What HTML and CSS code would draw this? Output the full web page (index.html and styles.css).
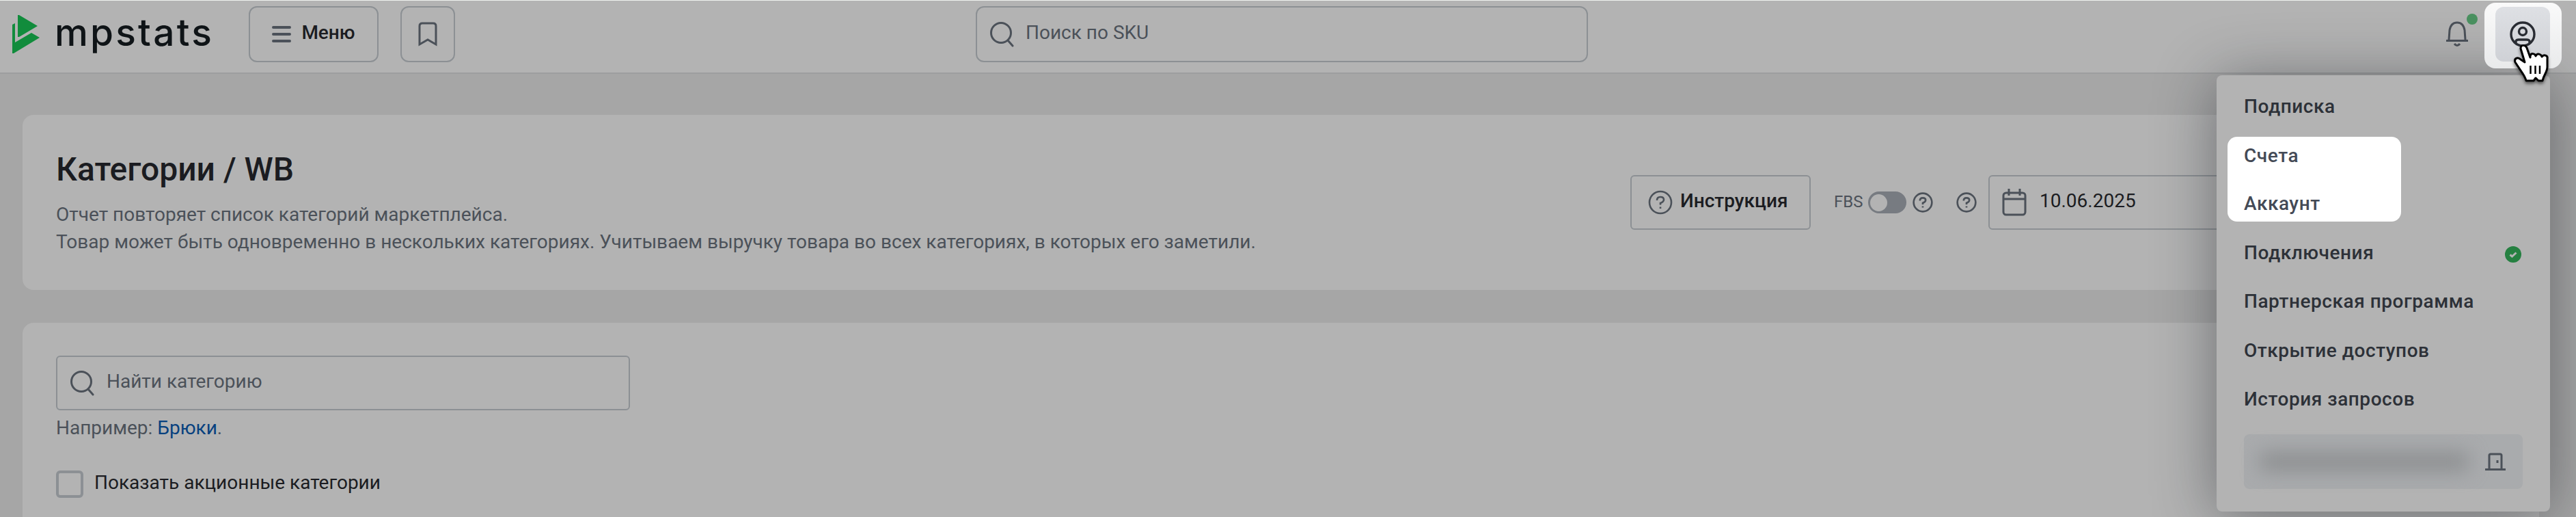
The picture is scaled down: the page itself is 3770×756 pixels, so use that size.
FILE: index.html
```html
<!DOCTYPE html>
<html lang="ru">
<head>
    <meta charset="UTF-8">
    <title>MPSTATS</title>
    <link rel="stylesheet" href="styles.css">
</head>
<body>
<header class="header">
    <a class="logo">
        <svg class="logo-mark" width="40" height="56" viewBox="0 0 40 56">
            <path fill="#118c3c" d="M8 0H10L37 16L10 32H8zM0 14L4 12V40L28 26L40 33L2 56H0z"/>
        </svg>
        <span class="logo-text">mpstats</span>
    </a>
    <button class="btn btn-menu">
        <svg width="28" height="26" viewBox="0 0 28 26" fill="none" stroke="#4b5159" stroke-width="4" stroke-linecap="round">
            <path d="M2 3H26M2 13H26M2 23H26"/>
        </svg>
        <span class="label">Меню</span>
    </button>
    <button class="btn btn-bookmark">
        <svg width="28" height="36" viewBox="0 0 28 36" fill="none" stroke="#4b5159" stroke-width="3">
            <path d="M2 33V6Q2 2 6 2H22Q26 2 26 6V33L14 26Z"/>
        </svg>
    </button>
    <div class="field header-search">
        <svg width="36" height="38" viewBox="0 0 36 38" fill="none" stroke="#4b5159" stroke-width="3" stroke-linecap="round">
            <circle cx="17" cy="17" r="14.5"/><path d="M27 28L34 36"/>
        </svg>
        <span class="label">Поиск по SKU</span>
    </div>
    <div class="bell">
        <svg width="34" height="38" viewBox="0 0 34 38" fill="none" stroke="#4b5159" stroke-width="3">
            <path d="M5 27L6 13Q8 2 17 2Q26 2 28 13L29 27M1 28.500H33M13 33Q17 38 21 33"/>
        </svg>
        <span class="bell-dot"></span>
    </div>
</header>

<main class="page">
    <section class="card card-title">
        <div class="intro">
            <h1>Категории / WB</h1>
            <p>Отчет повторяет список категорий маркетплейса.<br>Товар может быть одновременно в нескольких категориях. Учитываем выручку товара во всех категориях, в которых его заметили.</p>
        </div>
        <div class="controls">
            <button class="btn btn-help">
                <svg width="36" height="36" viewBox="0 0 36 36" fill="none" stroke="#4b5159" stroke-width="2.600">
                    <circle cx="18" cy="18" r="16"/><path d="M13 15Q13 10 18 10Q23 10 23 14Q23 17 18 19V21.500M18 24.500V27"/>
                </svg>
                <span class="label">Инструкция</span>
            </button>
            <span class="fbs">FBS</span>
            <span class="toggle"><span class="toggle-knob"></span></span>
            <svg class="hint" width="30" height="30" viewBox="0 0 36 36" fill="none" stroke="#4b5159" stroke-width="3.200">
                <circle cx="18" cy="18" r="16"/><path d="M13 15Q13 10 18 10Q23 10 23 14Q23 17 18 19V21.500M18 24.500V27"/>
            </svg>
            <svg class="hint hint-date" width="30" height="30" viewBox="0 0 36 36" fill="none" stroke="#4b5159" stroke-width="3.200">
                <circle cx="18" cy="18" r="16"/><path d="M13 15Q13 10 18 10Q23 10 23 14Q23 17 18 19V21.500M18 24.500V27"/>
            </svg>
            <div class="field date">
                <svg width="36" height="40" viewBox="0 0 36 40" fill="none" stroke="#4b5159" stroke-width="3">
                    <rect x="2" y="6" width="32" height="32" rx="4"/><path d="M2 15H34M10 0V10M26 0V10"/>
                </svg>
                <span class="label">10.06.2025</span>
            </div>
        </div>
    </section>

    <section class="card card-list">
        <div class="field category-search">
            <svg width="36" height="38" viewBox="0 0 36 38" fill="none" stroke="#4b5159" stroke-width="3" stroke-linecap="round">
                <circle cx="17" cy="17" r="14.500"/><path d="M27 28L34 36"/>
            </svg>
            <span class="label">Найти категорию</span>
        </div>
        <p class="example">Например: <a>Брюки</a>.</p>
        <label class="check"><span class="check-box"></span><span class="label">Показать акционные категории</span></label>
    </section>
</main>

<!-- user menu, opened under the account button -->
<nav class="user-menu">
    <a class="item">Подписка</a>
    <div class="item-group">
        <a class="item">Счета</a>
        <a class="item">Аккаунт</a>
    </div>
    <a class="item">Подключения
        <svg class="item-ok" width="24" height="24" viewBox="0 0 24 24">
            <circle cx="12" cy="12" r="12" fill="#258041"/>
            <path d="M7.500 12.500L10.500 15L16.500 9.500" fill="none" stroke="#b3b3b3" stroke-width="3"/>
        </svg>
    </a>
    <a class="item">Партнерская программа</a>
    <a class="item">Открытие доступов</a>
    <a class="item">История запросов</a>
    <div class="account">
        <span class="account-mail"></span>
        <svg width="30" height="26" viewBox="0 0 30 26" fill="none" stroke="#4b5159" stroke-width="3">
            <path d="M0 24.500H30M6 24V4Q6 2 8 2H22Q24 2 24 4V24"/><path d="M18 11V15"/>
        </svg>
    </div>
</nav>

<div class="account-spot">
    <div class="account-btn">
        <svg width="38" height="38" viewBox="0 0 38 38" fill="none" stroke="#292c33" stroke-width="3.400">
            <circle cx="19" cy="19" r="17"/><circle cx="19" cy="15" r="5.500"/><path d="M9 32V29Q10 27 13 27H25Q28 27 29 29V32"/>
        </svg>
    </div>
</div>
<svg class="pointer" width="52" height="56" viewBox="0 0 52 56">
    <path d="M10 6C10 0 17 0 19 5L24 19V17C25 12 31 13 32 17C34 12 40 14 41 18C44 14 50 16 49 21V33C49 40 44 44 42 53H36L32 49L29 53H18C16 45 11 40 8 35L2 26C0 20 6 18 10 22L16 26Z" fill="#fff" stroke="#000" stroke-width="3" stroke-linejoin="round"/>
    <path d="M24.500 31V43M31.500 31V43M38 31V43" stroke="#000" stroke-width="2.500"/>
</svg>
</body>
</html>
```

FILE: styles.css
```css
* {
    box-sizing: border-box;
}

body {
    margin: 0;
    height: 756px;
    overflow: hidden;
    position: relative;
    background-color: #a6a6a6;
    font-family: Roboto, "Liberation Sans", sans-serif;
    font-size: 28px;
    line-height: 40px;
    color: #1b1c21;
}

svg {
    display: block;
    flex: none;
}

h1, p {
    margin: 0;
}

.label {
    padding-bottom: 4px;
}

.header {
    display: flex;
    align-items: center;
    height: 108px;
    padding: 0 152px 7px 18px;
    background-color: #b3b3b3;
    border-top: 1px solid #eef1ef;
    border-bottom: 2px solid #9d9e9f;
}

.logo {
    display: flex;
    align-items: center;
    width: 346px;
    gap: 22px;
}

.logo-text {
    padding-bottom: 7px;
    font-family: Inter, sans-serif;
    font-size: 55px;
    font-weight: 500;
    line-height: 56px;
    letter-spacing: 3.2px;
    color: #0f1417;
}

.btn {
    display: flex;
    align-items: center;
    justify-content: center;
    flex: none;
    padding: 0;
    background: none;
    border: 2px solid #8c9094;
    color: #1b1c21;
    font: 500 28px/40px Roboto, sans-serif;
}

.btn-menu {
    width: 190px;
    height: 82px;
    gap: 15px;
    border-radius: 12px;
}

.btn-bookmark {
    width: 80px;
    height: 82px;
    margin-left: 32px;
    border-radius: 12px;
}

.field {
    display: flex;
    align-items: center;
    flex: none;
    height: 80px;
    border: 2px solid #8c9094;
    border-radius: 6px;
    color: #4b5159;
}

.header-search {
    width: 896px;
    height: 82px;
    margin-left: 762px;
    padding-left: 18px;
    gap: 17px;
    border-radius: 12px;
}

.bell {
    position: relative;
    margin-left: auto;
    margin-right: 5px;
}

.bell-dot {
    position: absolute;
    top: -11px;
    right: -13px;
    width: 16px;
    height: 16px;
    border-radius: 50%;
    background-color: #4a9160;
}

.page {
    padding: 60px 54px 0 33px;
}

.card {
    background-color: #b3b3b3;
    border-radius: 16px;
}

.card-title {
    display: flex;
    justify-content: space-between;
    height: 256px;
    padding: 0 0 0 49px;
    overflow: hidden;
}

.intro {
    padding-top: 52px;
}

h1 {
    font-size: 48px;
    font-weight: 500;
    line-height: 56px;
}

.intro p {
    margin-top: 18px;
    color: #4b5159;
}

.controls {
    display: flex;
    align-items: center;
    width: 1330px;
}

.btn-help {
    justify-content: flex-start;
    width: 264px;
    height: 80px;
    padding-left: 24px;
    gap: 11px;
    border-radius: 6px;
}

.fbs {
    margin-left: 34px;
    padding-bottom: 2px;
    width: 50px;
    font-size: 24px;
    color: #4b5159;
}

.toggle {
    display: flex;
    align-items: center;
    width: 56px;
    height: 32px;
    padding: 3px;
    border-radius: 16px;
    background-color: #777b81;
}

.toggle-knob {
    width: 25px;
    height: 25px;
    border-radius: 50%;
    background-color: #b3b3b3;
}

.hint {
    margin-left: 9px;
}

.hint-date {
    margin-left: 34px;
}

.date {
    width: 700px;
    margin-left: 17px;
    padding-left: 18px;
    gap: 19px;
    color: #1b1c21;
}

.card-list {
    height: 284px;
    margin-top: 48px;
    padding: 48px 50px 0 49px;
    border-radius: 16px 16px 0 0;
}

.category-search {
    width: 840px;
    padding-left: 18px;
    gap: 18px;
}

.example {
    margin-top: 6px;
    color: #4b5159;
}

.example a {
    color: #07417f;
}

.check {
    display: flex;
    align-items: center;
    height: 40px;
    margin-top: 42px;
    gap: 16px;
}

.check-box {
    width: 40px;
    height: 40px;
    border: 4px solid #8c9094;
    border-radius: 6px;
}

.user-menu {
    position: absolute;
    top: 110px;
    left: 3244px;
    width: 488px;
    height: 638px;
    padding: 12px 16px 0;
    border-radius: 8px;
    background-color: #b3b3b3;
    box-shadow: 0 8px 90px rgba(20, 25, 30, 0.45);
    font-weight: 500;
    letter-spacing: 0.55px;
    color: #2d3138;
}

.item {
    display: flex;
    align-items: center;
    justify-content: space-between;
    height: 71.3px;
    padding: 0 26px 4px 24px;
}

.item-ok {
    margin-top: 4px;
}

.item-group {
    display: flex;
    flex-direction: column;
    gap: 22px;
    width: 254px;
    height: 124px;
    margin: 6.7px 0 12.3px;
    padding-top: 6px;
    border-radius: 14px;
    background-color: #fff;
    color: #444a56;
}

.item-group .item {
    height: 48px;
}

.account {
    display: flex;
    align-items: center;
    justify-content: space-between;
    width: 408px;
    height: 80px;
    margin: 14px 0 0 24px;
    padding: 0 25px 0 24px;
    border-radius: 8px;
    background-color: #a9abad;
}

.account-mail {
    width: 304px;
    height: 26px;
    background-color: #8b8d8f;
    filter: blur(14px);
}

.account-spot {
    position: absolute;
    top: 4px;
    left: 3636px;
    width: 113px;
    height: 96px;
    padding: 6px 16px;
    border-radius: 16px;
    background: linear-gradient(#fafafa, #e9eaeb);
}

.account-btn {
    display: flex;
    align-items: center;
    justify-content: center;
    width: 80px;
    height: 80px;
    border-radius: 12px;
    background: linear-gradient(#dee0e4, #cfd1d6);
}

.pointer {
    position: absolute;
    top: 65px;
    left: 3679px;
    filter: drop-shadow(0 3px 2px rgba(0, 0, 0, 0.5));
}
```
